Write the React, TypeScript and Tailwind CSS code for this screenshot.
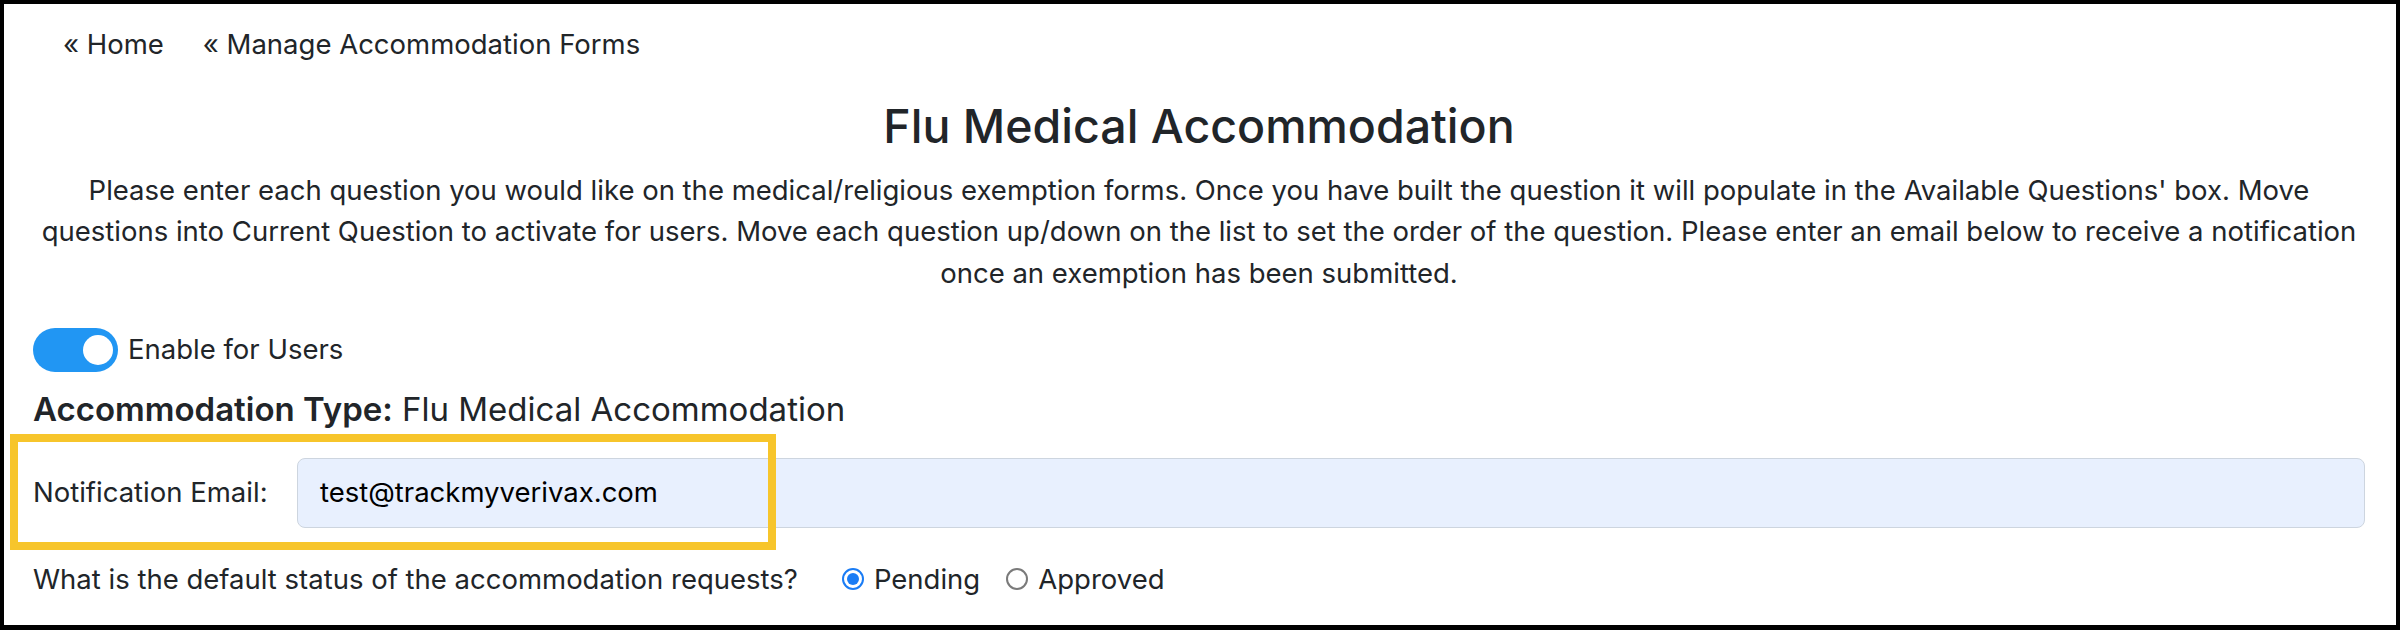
import React from "react";

export default function App() {
  return (
    <div
      className="w-[2400px] h-[630px] bg-white border-black border-x-4 border-t-4 border-b-[5px] overflow-hidden text-[#212529]"
      style={{ fontFamily: "Inter, 'Noto Sans', sans-serif" }}
    >
      <div className="pl-[29px] pr-[31px] pt-[20px]">
        <nav className="flex gap-[39px] pl-[30px] text-[27.5px] leading-[41px]">
          <a className="text-[#212529]">« Home</a>
          <a className="text-[#212529]">« Manage Accommodation Forms</a>
        </nav>

        <h2 className="mt-[32px] text-center text-[46.5px] leading-[58px] font-medium">
          Flu Medical Accommodation
        </h2>

        <p className="mt-[15px] text-center text-[27.5px] leading-[41.25px]">
          Please enter each question you would like on the medical/religious exemption forms. Once you have built the
          question it will populate in the Available Questions' box. Move
          <br />
          questions into Current Question to activate for users. Move each question up/down on the list to set the order
          of the question. Please enter an email below to receive a notification
          <br />
          once an exemption has been submitted.
        </p>

        <div className="mt-[34px] flex items-center gap-[10px] h-[44px]">
          <div className="relative w-[85px] h-[44px] rounded-full bg-[#2196f3] flex items-center justify-end pr-[5px]">
            <div className="w-[30px] h-[30px] rounded-full bg-white" />
          </div>
          <span className="text-[27.5px] leading-[41px]">Enable for Users</span>
        </div>

        <div className="mt-[17px] text-[33px] leading-[40px]">
          <span className="font-semibold">Accommodation Type:</span> Flu Medical Accommodation
        </div>

        <div className="relative mt-[29px] flex items-center h-[70px]">
          <label className="w-[264px] shrink-0 text-[27.5px] leading-[41px]">Notification Email:</label>
          <div className="flex-1 h-[70px] rounded-[8px] border border-[#cdd5df] bg-[#e8f0fe] flex items-center pl-[22px] text-[27.5px] text-black">
            test@trackmyverivax.com
          </div>
          <div className="absolute left-[-23px] top-[-24px] w-[766px] h-[116px] border-[8px] border-[#f7c52b] pointer-events-none" />
        </div>

        <div className="mt-[31px] flex items-center text-[27.5px] leading-[41px]">
          <span>What is the default status of the accommodation requests?</span>
          <span className="ml-[44px] w-[22px] h-[22px] rounded-full border-[2px] border-[#1a7cf5] bg-white flex items-center justify-center">
            <span className="w-[12px] h-[12px] rounded-full bg-[#1a7cf5]" />
          </span>
          <span className="ml-[10px]">Pending</span>
          <span className="ml-[26px] w-[22px] h-[22px] rounded-full border-[2px] border-[#7a7a7a] bg-white" />
          <span className="ml-[10px]">Approved</span>
        </div>
      </div>
    </div>
  );
}
